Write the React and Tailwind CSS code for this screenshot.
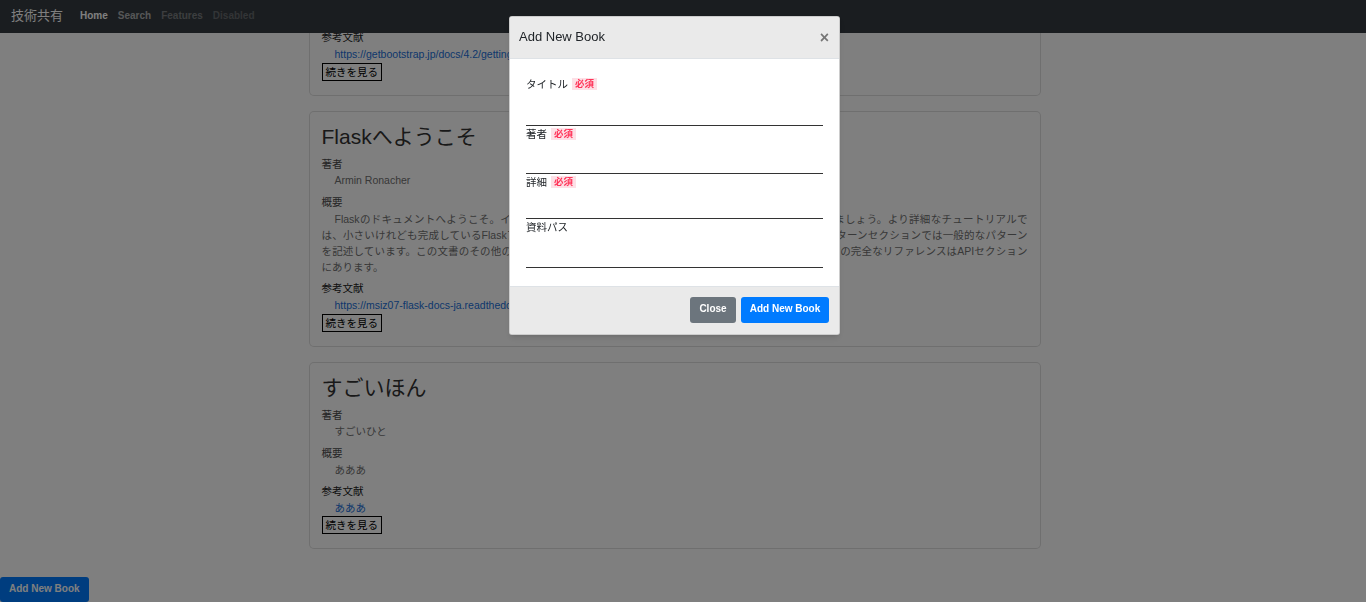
import React from 'react'

const books = [
	{
		title: 'Bootstrap入門',
		author: 'Bootstrapチーム',
		summary: ['Bootstrap 4.2 のはじめかたをまとめたドキュメントです。'],
		link: 'https://getbootstrap.jp/docs/4.2/getting-started/introduction/',
	},
	{
		title: 'Flaskへようこそ',
		author: 'Armin Ronacher',
		// lines are fixed so the wrap matches the original page
		summary: [
			'Flaskのドキュメントへようこそ。インストールから始めて、それからクイックスタートで概要をつかみましょう。より詳細なチュートリアルで',
			'は、小さいけれども完成しているFlaskアプリケーションの作成方法を示しています。よく使うパターンはパターンセクションでは一般的なパターン',
			'を記述しています。この文書のその他の部分では各構成要素をそれぞれ詳細に記述しております。そして、その完全なリファレンスはAPIセクション',
			'にあります。',
		],
		link: 'https://msiz07-flask-docs-ja.readthedocs.io/ja/latest/',
	},
	{
		title: 'すごいほん',
		author: 'すごいひと',
		summary: ['あああ'],
		link: 'あああ',
	},
]

function BookCard({ book }) {
	const last = book.summary.length - 1
	return (
		<div className="w-[732px] mx-auto bg-white border border-black/[0.125] rounded-[5px] px-[12px] pt-[12px] pb-[14px]">
			<h2 className="text-[21px] leading-[26px] text-[#333] mb-[6px]">{book.title}</h2>
			<div className="mb-[5px]">
				<div className="text-[#4a4a4a]">著者</div>
				<div className="indent-[13px] text-[#707070]">{book.author}</div>
			</div>
			<div className="mb-[5px]">
				<div className="text-[#4a4a4a]">概要</div>
				<p className="text-[#707070] leading-[16.2px]">
					{book.summary.map((line, i) => (
						<span
							key={i}
							className={`block whitespace-nowrap ${i === 0 ? 'indent-[13px]' : ''} ${
								i < last ? '[text-align-last:justify]' : ''
							}`}
						>
							{line}
						</span>
					))}
				</p>
			</div>
			<div>
				<div className="text-[#222]">参考文献</div>
				<a href="#" className="block indent-[13px] text-[#1a6fd8]">
					{book.link}
				</a>
			</div>
			<button className="border border-black px-[3px] leading-[16px] text-black">続きを見る</button>
		</div>
	)
}

function Badge() {
	return (
		<span className="inline-block ml-[4px] px-[3px] leading-[12px] text-[9.5px] font-bold bg-[#fde0e6] text-[#ff3358] align-[1px]">
			必須
		</span>
	)
}

function Field({ label, required, height }) {
	return (
		<div>
			<label className="block text-[#212529]">
				{label}
				{required && <Badge />}
			</label>
			<input className={`block w-full border-b border-[#333] outline-none ${height}`} />
		</div>
	)
}

function App() {
	return (
		<div className="relative h-[602px] overflow-hidden bg-white font-['Liberation_Sans','Noto_Sans_CJK_JP',sans-serif] text-[10.5px] leading-[16.67px]">
			<nav className="fixed top-0 inset-x-0 z-10 h-[33px] bg-[#343a40] flex items-center px-[11px]">
				<span className="text-[13px] text-white mr-[12px]">技術共有</span>
				<div className="flex text-[10px] font-bold">
					<a className="px-[5px] text-white">Home</a>
					<a className="px-[5px] text-white/60">Search</a>
					<a className="px-[5px] text-white/35">Features</a>
					<a className="px-[5px] text-white/25">Disabled</a>
				</div>
			</nav>

			<main className="-mt-[92px] pr-[17px] flex flex-col gap-[15px]">
				{books.map((b) => (
					<BookCard key={b.title} book={b} />
				))}
			</main>

			<button className="fixed bottom-0 left-0 h-[25px] px-[9px] rounded-[3px] bg-[#007bff] text-white text-[10px] font-bold">
				Add New Book
			</button>

			<div className="fixed inset-0 z-20 bg-black/50" />

			<div className="fixed inset-0 z-30 flex justify-center items-start pt-[16px] pr-[17px]">
				<div className="w-[331px] bg-white border border-black/20 rounded-[3px] shadow-md overflow-hidden">
					<div className="h-[42px] bg-[#eaeaea] border-b border-[#dee2e6] flex items-center justify-between pl-[9px] pr-[10px]">
						<h5 className="text-[13px] text-[#212529]">Add New Book</h5>
						<button className="text-[16px] leading-none font-bold text-black/50">×</button>
					</div>
					<div className="px-[16px] pt-[17px] pb-[18px]">
						<Field label="タイトル" required height="h-[33px]" />
						<Field label="著者" required height="h-[32px]" />
						<Field label="詳細" required height="h-[28px]" />
						<Field label="資料パス" height="h-[32px]" />
					</div>
					<div className="bg-[#eaeaea] border-t border-[#dee2e6] flex justify-end gap-[5px] px-[10px] pt-[10px] pb-[11px]">
						<button className="h-[26px] w-[46px] rounded-[3px] bg-[#6c757d] text-white text-[10px] font-bold">
							Close
						</button>
						<button className="h-[26px] w-[88px] rounded-[3px] bg-[#007bff] text-white text-[10px] font-bold">
							Add New Book
						</button>
					</div>
				</div>
			</div>
		</div>
	)
}

export default App
